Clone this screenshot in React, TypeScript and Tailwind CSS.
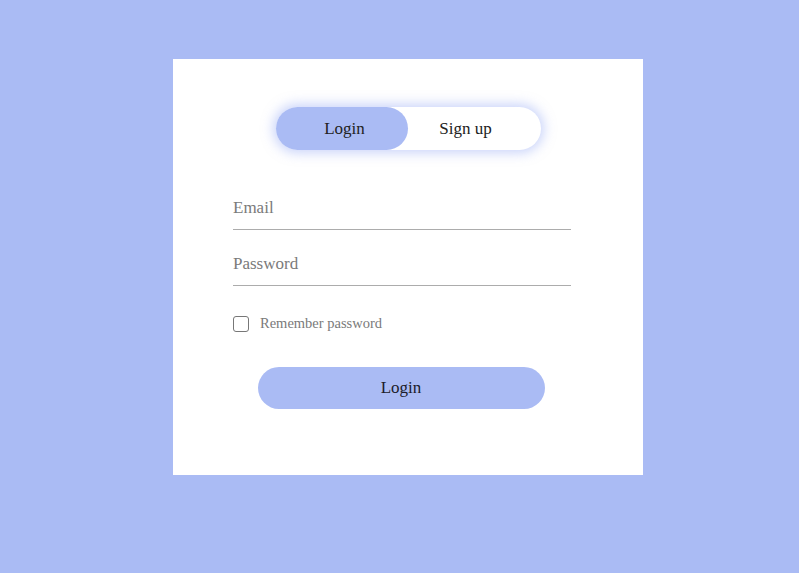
import { useState } from "react";

const SERIF = "font-['Liberation_Serif','Times_New_Roman',serif]";

function Field({ label, type }: { label: string; type: string }) {
  return (
    <div className="border-b border-[#acacac] pt-[4px] pb-[11px]">
      <input
        type={type}
        placeholder={label}
        className={`${SERIF} block h-[20px] w-full bg-transparent text-[17px] leading-[20px] text-[#333] outline-none placeholder:text-[#7a7a7a]`}
      />
    </div>
  );
}

export default function App() {
  const [mode, setMode] = useState<"login" | "signup">("login");
  const [remember, setRemember] = useState(false);

  return (
    <div className={`${SERIF} min-h-[573px] w-full bg-[#aabbf4] pl-[173px] pt-[59px]`}>
      <div className="flex h-[416px] w-[470px] flex-col bg-white">
        <div className="mt-[48px] flex justify-center">
          <div className="flex h-[43px] w-[265px] rounded-full bg-white shadow-[0_0_12px_3px_rgba(150,170,245,0.5)]">
            <button
              onClick={() => setMode("login")}
              className={`h-full w-[132px] rounded-full pl-[6px] text-[17px] text-[#222] ${mode === "login" ? "bg-[#aabbf4]" : ""}`}
            >
              Login
            </button>
            <button
              onClick={() => setMode("signup")}
              className={`h-full w-[116px] rounded-full text-[17px] text-[#222] ${mode === "signup" ? "bg-[#aabbf4]" : ""}`}
            >
              Sign up
            </button>
          </div>
        </div>

        <div className="ml-[60px] mt-[44px] w-[338px]">
          <Field label="Email" type="email" />
          <div className="mt-[20px]">
            <Field label="Password" type="password" />
          </div>

          <label className="mt-[27px] flex cursor-pointer items-center gap-[11px]">
            <span
              onClick={() => setRemember(!remember)}
              className="flex h-[16px] w-[16px] items-center justify-center rounded-[3px] border border-[#777] text-[11px] leading-none"
            >
              {remember ? "✓" : ""}
            </span>
            <span className="text-[14.5px] text-[#7a7a7a]">Remember password</span>
          </label>

          <div className="mt-[32px] flex justify-center pr-[2px]">
            <button className="h-[42px] w-[287px] rounded-full bg-[#aabbf4] text-[17px] text-[#1c1c2a]">
              Login
            </button>
          </div>
        </div>
      </div>
    </div>
  );
}
